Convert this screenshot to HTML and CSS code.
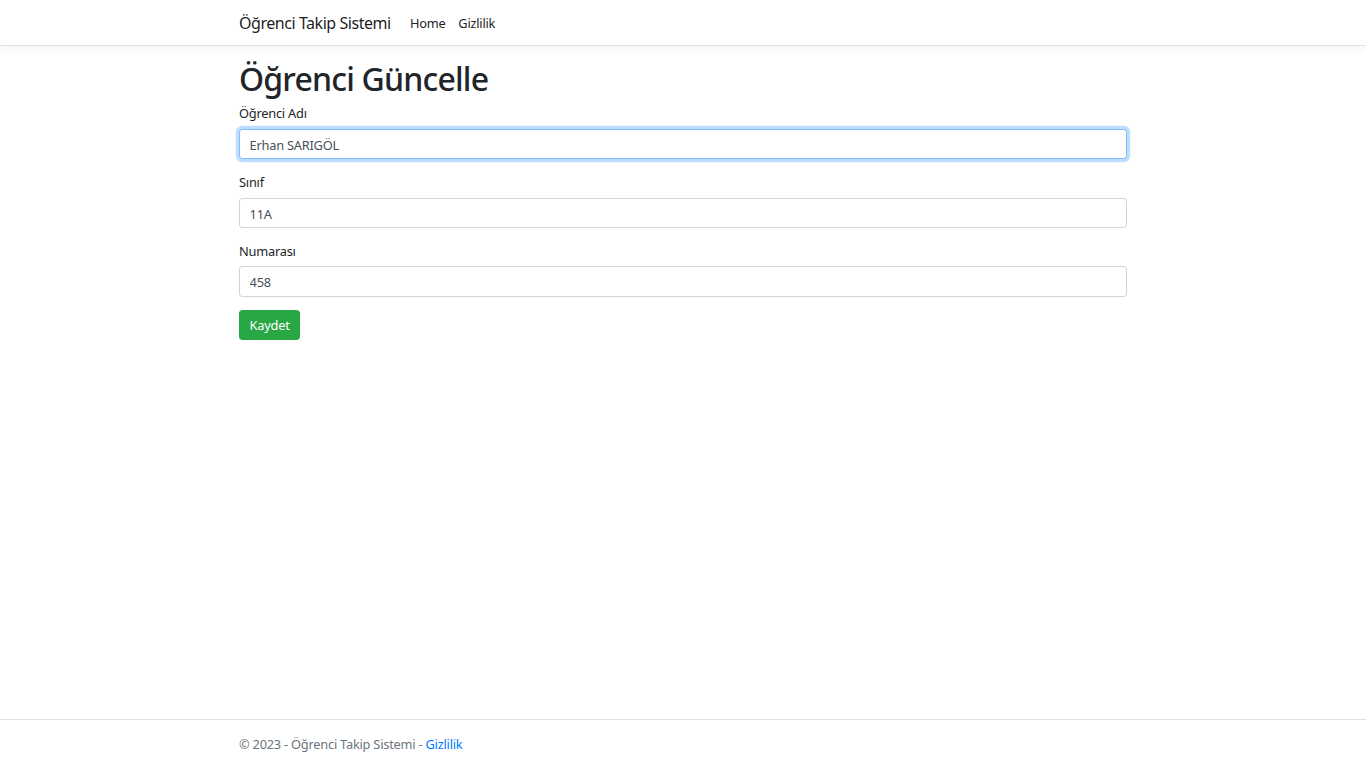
FILE: index.html
```html
<!DOCTYPE html>
<html lang="tr">
<head>
<meta charset="utf-8">
<title>Öğrenci Güncelle - Öğrenci Takip Sistemi</title>
<link rel="stylesheet" href="styles.css">
</head>
<body>
<header>
  <nav class="navbar">
    <div class="container nav-inner">
      <a class="brand" href="#">Öğrenci Takip Sistemi</a>
      <ul class="nav-links">
        <li><a class="nav-link" href="#">Home</a></li>
        <li><a class="nav-link" href="#">Gizlilik</a></li>
      </ul>
    </div>
  </nav>
</header>
<div class="container main">
  <main>
    <h1>Öğrenci Güncelle</h1>
    <form>
      <div class="form-group">
        <label for="ad">Öğrenci Adı</label>
        <input id="ad" class="form-control focused" type="text" value="Erhan SARIGÖL">
      </div>
      <div class="form-group">
        <label for="sinif">Sınıf</label>
        <input id="sinif" class="form-control" type="text" value="11A">
      </div>
      <div class="form-group">
        <label for="no">Numarası</label>
        <input id="no" class="form-control" type="text" value="458">
      </div>
      <button type="button" class="btn btn-success">Kaydet</button>
    </form>
  </main>
</div>
<footer class="footer">
  <div class="container">
    © 2023 - Öğrenci Takip Sistemi - <a href="#">Gizlilik</a>
  </div>
</footer>
</body>
</html>
```
FILE: styles.css
```css
* { box-sizing: border-box; }
html, body { margin: 0; padding: 0; }
body {
  font-family: "Segoe UI", "Noto Sans", sans-serif;
  font-size: 12.8px;
  line-height: 1.5;
  letter-spacing: -0.22px;
  color: #212529;
  background: #fff;
  min-height: 100vh;
  display: flex;
  flex-direction: column;
}
a { text-decoration: none; }
.container {
  width: 100%;
  max-width: 912px;
  margin: 0 auto;
  padding: 0 12px;
}
.navbar {
  background: #fff;
  border-bottom: 1px solid #dee2e6;
  box-shadow: 0 3.2px 9.6px rgba(0,0,0,.05);
  padding: 6.4px 0;
  margin-bottom: 12.8px;
}
.nav-inner {
  display: flex;
  align-items: center;
}
.brand {
  font-size: 16px;
  line-height: 1.5;
  letter-spacing: -0.45px;
  padding: 5px 0 3px;
  margin-right: 12.8px;
  color: rgba(0,0,0,.9);
  white-space: nowrap;
}
.nav-links {
  list-style: none;
  display: flex;
  margin: 0;
  padding: 0;
}
.nav-link {
  display: block;
  padding: 8px 6.4px 4.8px;
  color: #212529;
}
.main { flex: 1; }
main { padding-bottom: 12.8px; }
h1 {
  font-size: 32px;
  font-weight: 500;
  line-height: 1.2;
  letter-spacing: -0.8px;
  margin: 0 0 6.4px;
  padding-top: 1px;
  height: 38.4px;
}
form { margin: 0; }
.form-group { margin-bottom: 12.8px; }
label {
  display: inline-block;
  margin-bottom: 6.4px;
  padding-top: 1px;
  height: 19.2px;
}
.form-control {
  display: block;
  width: 100%;
  height: 30.4px;
  padding: 5.4px 9.6px 4.2px;
  font-family: inherit;
  font-size: 12.8px;
  line-height: 1.5;
  letter-spacing: -0.22px;
  color: #495057;
  background: #fff;
  border: 1px solid #ced4da;
  border-radius: 3.2px;
  outline: none;
}
.form-control.focused {
  border-color: #80bdff;
  box-shadow: 0 0 0 3.2px rgba(0,123,255,.25);
}
.btn {
  display: inline-block;
  font-family: inherit;
  font-size: 12.8px;
  line-height: 1.5;
  letter-spacing: -0.22px;
  padding: 5.4px 9.6px 4.2px;
  border: 1px solid transparent;
  border-radius: 3.2px;
  cursor: pointer;
}
.btn-success {
  color: #fff;
  background: #28a745;
  border-color: #28a745;
}
.footer {
  border-top: 1px solid #dee2e6;
  color: #6c757d;
  line-height: 48px;
  white-space: nowrap;
}
.footer .container { height: 48px; }
.footer a { color: #007bff; }
```
